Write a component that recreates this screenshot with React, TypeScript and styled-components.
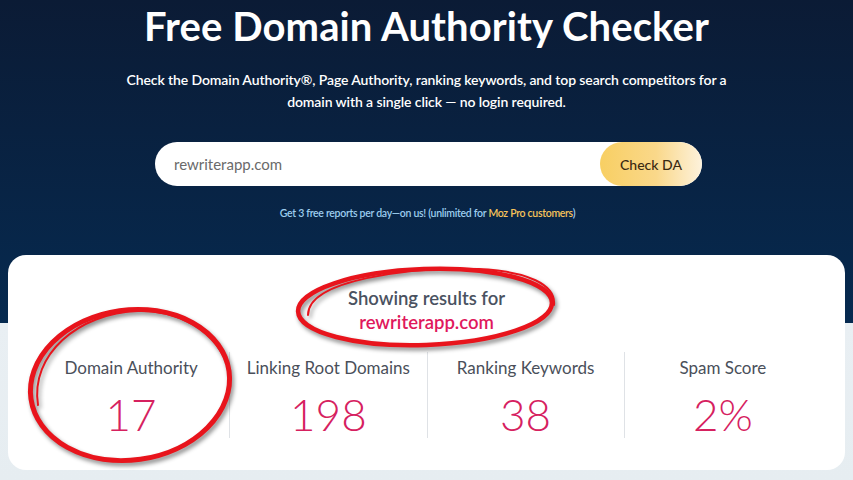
import React from 'react'
import styled, { createGlobalStyle } from 'styled-components'

const GlobalStyle = createGlobalStyle`
  html, body {
    margin: 0;
    padding: 0;
  }
  body {
    font-family: Lato, "Open Sans", "Liberation Sans", sans-serif;
    background: #e9eff3;
  }
`

const stats = [
  { label: 'Domain Authority', value: '17' },
  { label: 'Linking Root Domains', value: '198' },
  { label: 'Ranking Keywords', value: '38' },
  { label: 'Spam Score', value: '2%' }
]

const Page = styled.div`
  width: 853px;
  height: 480px;
  overflow: hidden;
  background:
    linear-gradient(180deg, #0b1b35 0px, #062a50 323px, #e9eff3 323px, #e6edf1 480px);
`

const Hero = styled.header`
  display: flex;
  flex-direction: column;
  align-items: center;
  padding-top: 4px;
`

const Title = styled.h1`
  margin: 0;
  font-size: 40px;
  line-height: 45px;
  font-weight: 700;
  color: #ffffff;
  letter-spacing: 0.1px;
`

const Subtitle = styled.p`
  margin: 20px 0 0;
  width: 640px;
  text-align: center;
  font-size: 14px;
  line-height: 22px;
  font-weight: 600;
  color: #ffffff;
  letter-spacing: -0.1px;
`

const SearchBar = styled.form`
  margin: 29px 0 0 4px;
  width: 547px;
  height: 44px;
  display: flex;
  align-items: stretch;
  background: #ffffff;
  border-radius: 22px;
  overflow: hidden;
`

const SearchInput = styled.input`
  flex: 1;
  border: none;
  outline: none;
  background: transparent;
  padding: 0 0 0 19px;
  font-family: inherit;
  font-size: 15px;
  color: #6a6a6a;
  &::placeholder {
    color: #6a6a6a;
  }
`

const CheckButton = styled.button`
  width: 102px;
  border: none;
  border-radius: 22px;
  background: linear-gradient(90deg, #f8cf63 0%, #fad88a 55%, #fdf2dc 100%);
  font-family: inherit;
  font-size: 14px;
  font-weight: 500;
  color: #3a2a12;
  cursor: pointer;
`

const Note = styled.p`
  margin: 20px 0 0 2px;
  font-size: 10.5px;
  line-height: 14px;
  font-weight: 600;
  color: #9ccdee;
  letter-spacing: -0.3px;
`

const Highlight = styled.span`
  color: #f6c35a;
`

const Card = styled.section`
  position: relative;
  margin: 35px 8px 0;
  height: 215px;
  box-sizing: border-box;
  padding: 31px 24px 0;
  background: #ffffff;
  border-radius: 18px;
`

const Showing = styled.div`
  text-align: center;
  font-size: 18.5px;
  line-height: 24px;
  font-weight: 600;
  color: #4a5261;
`

const Domain = styled.div`
  color: #e0185c;
`

const StatsRow = styled.div`
  margin-top: 18px;
  display: grid;
  grid-template-columns: repeat(4, 1fr);
`

const Stat = styled.div<{ $divider?: boolean }>`
  height: 86px;
  padding-top: 4px;
  box-sizing: border-box;
  display: flex;
  flex-direction: column;
  align-items: center;
  border-left: ${({ $divider }) => ($divider ? '1px solid #dfe2e6' : '1px solid transparent')};
`

const StatLabel = styled.div`
  font-size: 17px;
  line-height: 24px;
  color: #4a4f5a;
`

const StatValue = styled.div`
  margin-top: 9px;
  font-size: 44px;
  line-height: 50px;
  font-weight: 300;
  color: #d6215f;
`

const Annotations = styled.svg`
  position: absolute;
  inset: 0;
  width: 100%;
  height: 100%;
  pointer-events: none;
  overflow: visible;
  filter: drop-shadow(2px 3px 2px rgba(0, 0, 0, 0.45));
`

const RedEllipses = () => (
  <Annotations viewBox='0 0 837 215' preserveAspectRatio='none'>
    <g fill='none' stroke='#e8141c' strokeLinecap='round'>
      <ellipse cx='417' cy='52' rx='127' ry='38' strokeWidth='4.5' transform='rotate(-2 417 52)' />
      <path d='M 300 60 C 300 25, 400 12, 470 14 C 520 16, 548 30, 546 50' strokeWidth='2' />
      <ellipse cx='122' cy='130' rx='100' ry='75' strokeWidth='5' transform='rotate(-8 122 130)' />
      <path d='M 30 150 C 22 100, 70 58, 130 56 C 180 55, 215 85, 222 120' strokeWidth='2' />
    </g>
  </Annotations>
)

export default function App () {
  return (
    <Page>
      <GlobalStyle />
      <Hero>
        <Title>Free Domain Authority Checker</Title>
        <Subtitle>
          Check the Domain Authority®, Page Authority, ranking keywords, and top search competitors for a domain with a single click — no login required.
        </Subtitle>
        <SearchBar onSubmit={(e) => e.preventDefault()}>
          <SearchInput placeholder='rewriterapp.com' />
          <CheckButton type='submit'>Check DA</CheckButton>
        </SearchBar>
        <Note>
          Get 3 free reports per day—on us! (unlimited for <Highlight>Moz Pro customers</Highlight>)
        </Note>
      </Hero>
      <Card>
        <Showing>
          Showing results for
          <Domain>rewriterapp.com</Domain>
        </Showing>
        <StatsRow>
          {stats.map((stat, index) => (
            <Stat key={stat.label} $divider={index > 0}>
              <StatLabel>{stat.label}</StatLabel>
              <StatValue>{stat.value}</StatValue>
            </Stat>
          ))}
        </StatsRow>
        <RedEllipses />
      </Card>
    </Page>
  )
}
